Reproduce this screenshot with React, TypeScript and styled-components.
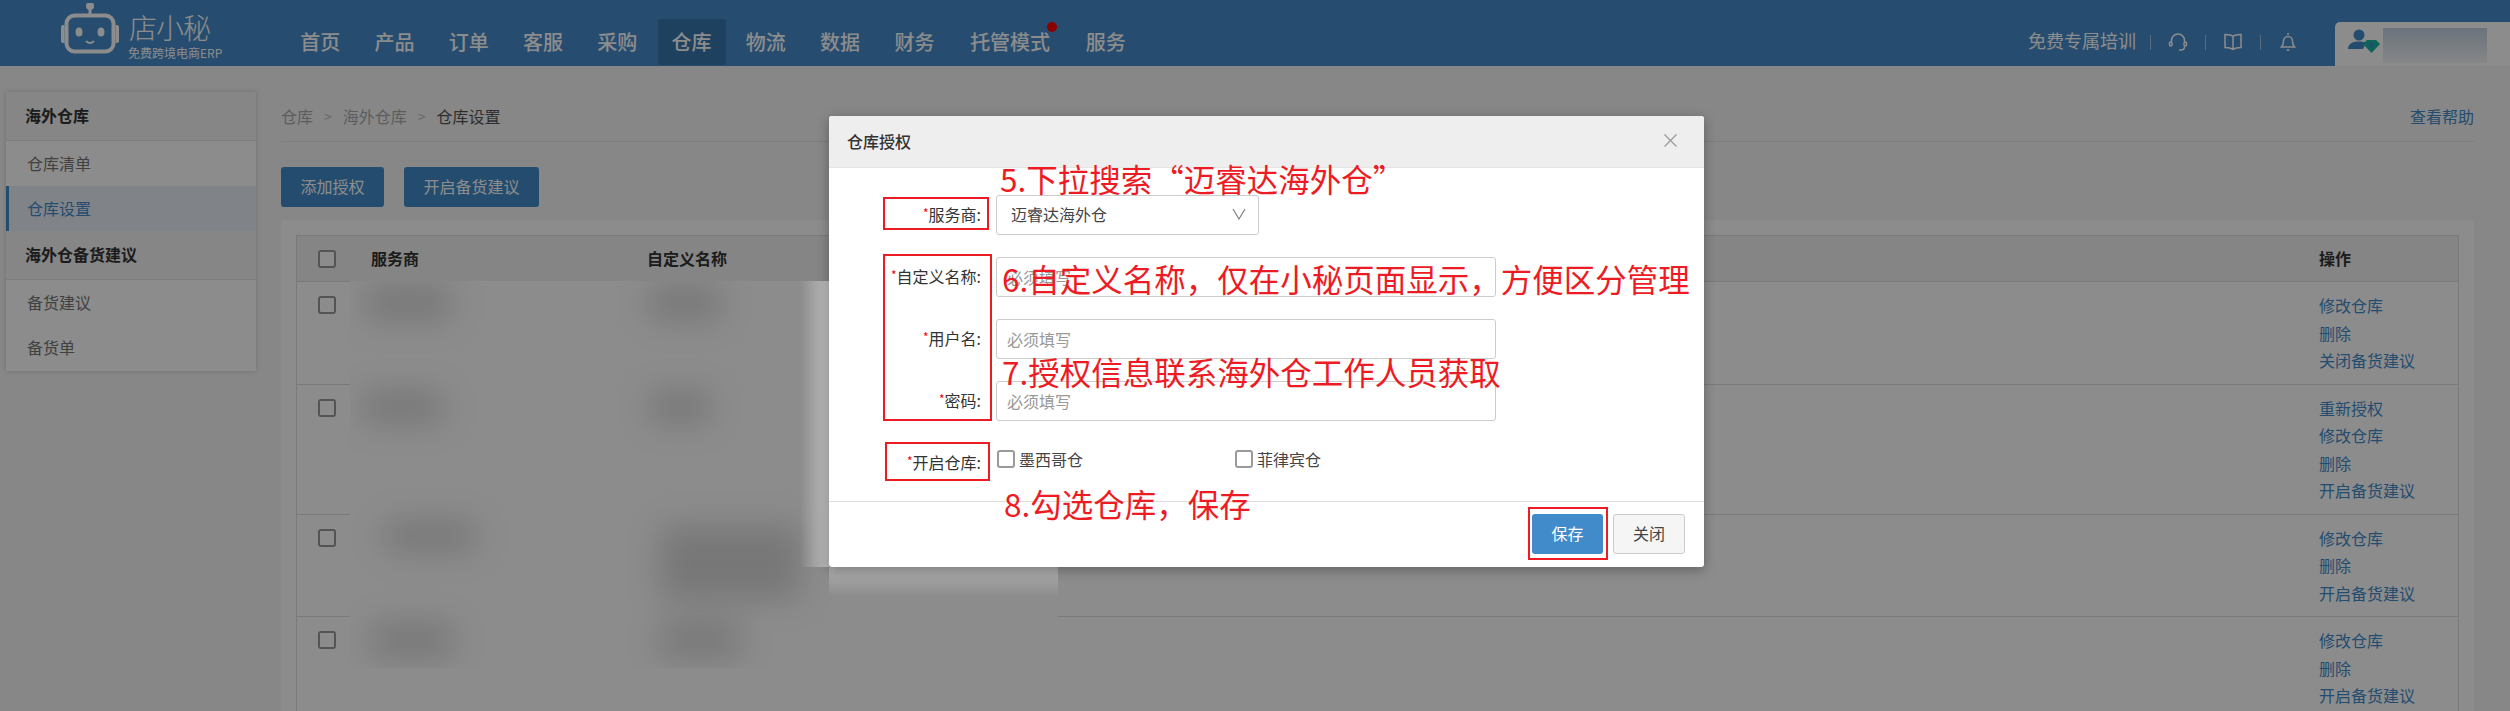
import React from "react";
import styled, { createGlobalStyle } from "styled-components";

const FONT = `"Noto Sans CJK SC", "Noto Sans", "Liberation Sans", sans-serif`;

const Global = createGlobalStyle`
  html, body { margin: 0; padding: 0; height: 711px; overflow: hidden; background: #f6f6f6; }
  * { box-sizing: border-box; }
  body { font-family: ${FONT}; font-size: 16px; color: #333; }
`;

const Page = styled.div`
  position: relative;
  width: 2510px;
  height: 711px;
  overflow: hidden;
  display: flex;
  flex-direction: column;
`;

/* ---------- top bar ---------- */
const TopBar = styled.header`
  height: 66px;
  flex: none;
  background: #458bcd;
  display: flex;
  color: #fff;
`;
const Logo = styled.div`
  width: 283px;
  flex: none;
  display: flex;
  padding: 3px 0 0 60px;
  gap: 9px;
`;
const LogoWords = styled.div`
  display: flex;
  flex-direction: column;
  align-items: flex-start;
`;
const LogoName = styled.span`
  font-size: 28px;
  line-height: 38px;
  font-weight: 300;
  letter-spacing: -1px;
  margin-top: 5px;
`;
const LogoSub = styled.span`
  font-size: 12px;
  line-height: 14px;
  white-space: nowrap;
  margin-left: -1px;
`;
const Nav = styled.nav`
  display: flex;
  align-self: flex-end;
  height: 47px;
`;
const NavItem = styled.a<{ $active?: boolean; $wide?: boolean }>`
  position: relative;
  height: 46px;
  margin: 0 ${(p) => (p.$wide ? 4.6 : 3.15)}px;
  padding: 0 14px;
  font-size: 20px;
  font-weight: 500;
  line-height: 45px;
  color: #fff;
  border-radius: 2px;
  background: ${(p) => (p.$active ? "#3a77b0" : "transparent")};
`;
const Dot = styled.i`
  position: absolute;
  right: 7px;
  top: 3px;
  width: 10px;
  height: 10px;
  border-radius: 50%;
  background: #ff0000;
`;
const TopRight = styled.div`
  margin-left: auto;
  display: flex;
  align-items: flex-start;
`;
const Training = styled.span`
  font-size: 18px;
  line-height: 22px;
  margin-top: 29px;
  margin-right: 14px;
`;
const Sep = styled.i`
  width: 1px;
  height: 15px;
  margin-top: 35px;
  background: rgba(255, 255, 255, 0.5);
`;
const IconSlot = styled.span`
  width: 54px;
  height: 20px;
  margin-top: 32px;
  display: flex;
  justify-content: center;
  color: #fff;
`;
const UserBox = styled.div`
  width: 175px;
  height: 44px;
  margin: 22px 0 0 20px;
  background: #fff;
  border-top-left-radius: 5px;
  display: flex;
  align-items: flex-start;
  padding: 6px 0 0 12px;
`;
const UserName = styled.div`
  width: 104px;
  height: 35px;
  margin-left: 2px;
  background: linear-gradient(#c3d2e3, #f3f4f6);
`;

/* ---------- body ---------- */
const Body = styled.div`
  flex: 1;
  display: flex;
  min-height: 0;
  padding: 26px 36px 0 6px;
  gap: 25px;
`;
const Side = styled.aside`
  width: 250px;
  height: 279px;
  flex: none;
  background: #fff;
  box-shadow: 0 0 5px rgba(0, 0, 0, 0.18);
`;
const SideHead = styled.div`
  height: 49px;
  padding-left: 19px;
  background: #f4f4f4;
  border-bottom: 1px solid #e3e3e3;
  font-size: 16px;
  font-weight: 700;
  line-height: 46px;
  color: #333;
`;
const SideItem = styled.div<{ $active?: boolean }>`
  height: 45px;
  padding-left: ${(p) => (p.$active ? 18 : 21)}px;
  border-left: ${(p) => (p.$active ? "3px solid #428bca" : "0")};
  background: ${(p) => (p.$active ? "#e9eff8" : "#fff")};
  color: ${(p) => (p.$active ? "#428bca" : "#777")};
  font-size: 16px;
  line-height: 45px;
`;
const Main = styled.main`
  flex: 1;
  min-width: 0;
  display: flex;
  flex-direction: column;
`;
const Crumbs = styled.div`
  height: 50px;
  flex: none;
  display: flex;
  align-items: center;
  padding-bottom: 2px;
  border-bottom: 1px solid #e3e3e3;
  font-size: 16px;
  color: #aaa;
`;
const CrumbSep = styled.span`
  margin: 0 11px;
  color: #bbb;
  font-size: 14px;
`;
const CrumbNow = styled.span`
  color: #555;
`;
const Help = styled.a`
  margin-left: auto;
  color: #428bca;
`;
const Tools = styled.div`
  display: flex;
  gap: 20px;
  margin: 25px 0 13px;
  flex: none;
`;
const PrimaryBtn = styled.button`
  height: 40px;
  padding: 0 19.5px 2px;
  border: 0;
  border-radius: 3px;
  background: #428bca;
  color: #fff;
  font: 16px ${FONT};
`;
const Panel = styled.section`
  flex: 1;
  background: #fff;
  padding: 15px 15px 0;
  border-radius: 4px 4px 0 0;
  min-height: 0;
`;
const Table = styled.div`
  height: 100%;
  border: 1px solid #dedede;
  border-bottom: 0;
`;
const Row = styled.div<{ $head?: boolean }>`
  display: grid;
  grid-template-columns: 53px 276px 1fr 154px;
  border-bottom: 1px solid #dedede;
  padding: ${(p) => (p.$head ? "0" : "11px 0 8px")};
  height: ${(p) => (p.$head ? "46px" : "auto")};
  align-items: ${(p) => (p.$head ? "center" : "start")};
  background: ${(p) => (p.$head ? "#f2f2f2" : "#fff")};
`;
const HeadCell = styled.div<{ $last?: boolean }>`
  padding: 0 0 2px ${(p) => (p.$last ? 15 : 21)}px;
  font-size: 16px;
  font-weight: 700;
  color: #333;
`;
const Box = styled.span`
  display: block;
  width: 18px;
  height: 18px;
  border: 2px solid #9a9a9a;
  border-radius: 3px;
  background: #fff;
`;
const BoxCell = styled.div<{ $row?: boolean }>`
  padding: ${(p) => (p.$row ? "3px 0 0 21px" : "0 0 0 21px")};
`;
const Links = styled.div`
  grid-column: 4;
  padding-left: 15px;
  display: flex;
  flex-direction: column;
  margin-top: -1px;
  margin-bottom: 1px;
`;
const LinkAct = styled.a`
  font-size: 16px;
  line-height: 27.5px;
  color: #428bca;
`;

/* ---------- blurred privacy patch ---------- */
const Patch = styled.div`
  position: absolute;
  left: 350px;
  top: 281px;
  width: 708px;
  height: 387px;
  background: #fff;
  overflow: hidden;
`;
const Blob = styled.i<{ $x: number; $y: number; $w: number; $h: number }>`
  position: absolute;
  left: ${(p) => p.$x - 350}px;
  top: ${(p) => p.$y - 281}px;
  width: ${(p) => p.$w}px;
  height: ${(p) => p.$h}px;
  background: rgba(0, 0, 0, 0.15);
  filter: blur(16px);
`;

/* ---------- modal ---------- */
const Mask = styled.div`
  position: absolute;
  inset: 0;
  background: rgba(0, 0, 0, 0.45);
`;
const FadeSide = styled.div`
  position: absolute;
  left: 800px;
  top: 281px;
  width: 29px;
  height: 286px;
  background: linear-gradient(to right, rgba(255, 255, 255, 0), rgba(255, 255, 255, 0.42));
`;
const FadeBottom = styled.div`
  position: absolute;
  left: 829px;
  top: 567px;
  width: 229px;
  height: 30px;
  background: linear-gradient(rgba(255, 255, 255, 0.3), rgba(255, 255, 255, 0));
`;
const Modal = styled.div`
  position: absolute;
  left: 829px;
  top: 116px;
  width: 875px;
  height: 451px;
  background: #fff;
  border-radius: 3px;
  box-shadow: 0 3px 12px rgba(0, 0, 0, 0.3);
  display: flex;
  flex-direction: column;
`;
const ModalHead = styled.div`
  height: 52px;
  flex: none;
  background: #eee;
  border-bottom: 1px solid #e5e5e5;
  border-radius: 3px 3px 0 0;
  display: flex;
  align-items: center;
  justify-content: space-between;
  padding: 0 26px 2px 18px;
  font-size: 16px;
  font-weight: 500;
  color: #333;
`;
const Close = styled.span`
  display: flex;
  color: #9a9a9a;
`;
const Form = styled.div`
  padding-top: 27px;
  display: flex;
  flex-direction: column;
  gap: 22px;
`;
const FormRow = styled.div`
  display: flex;
  align-items: center;
  height: 40px;
`;
const Label = styled.label`
  width: 152px;
  margin-right: 15px;
  padding-bottom: 2px;
  text-align: right;
  font-size: 16px;
  color: #333;
  white-space: nowrap;
`;
const Star = styled.span`
  color: #e00;
  font-size: 12px;
  vertical-align: 3px;
`;
const Select = styled.div`
  width: 263px;
  height: 40px;
  border: 1px solid #ccc;
  border-radius: 3px;
  padding: 0 12px 2px 14px;
  display: flex;
  align-items: center;
  justify-content: space-between;
  font-size: 16px;
  color: #444;
`;
const Input = styled.input`
  width: 500px;
  height: 40px;
  border: 1px solid #ccc;
  border-radius: 3px;
  padding: 0 10px;
  font: 16px ${FONT};
  &::placeholder { color: #999; opacity: 1; }
`;
const Options = styled.div`
  display: flex;
  align-self: flex-start;
  padding-top: 7px;
  margin-left: 1px;
`;
const Option = styled.div`
  width: 238px;
  display: flex;
  align-items: center;
  gap: 4px;
  font-size: 16px;
  line-height: 18px;
  color: #444;
`;
const Foot = styled.div`
  margin-top: auto;
  height: 66px;
  border-top: 1px solid #ddd;
  display: flex;
  justify-content: flex-end;
  align-items: flex-start;
  gap: 10px;
  padding: 12px 19px 0 0;
`;
const SaveBtn = styled.button`
  width: 71px;
  height: 40px;
  padding: 0 0 2px;
  border: 0;
  border-radius: 3px;
  background: #428bca;
  color: #fff;
  font: 16px ${FONT};
`;
const CloseBtn = styled.button`
  width: 72px;
  height: 40px;
  padding: 0 0 2px;
  border: 1px solid #ccc;
  border-radius: 3px;
  background: #f5f5f5;
  color: #444;
  font: 16px ${FONT};
`;

/* ---------- red annotations ---------- */
const Note = styled.span<{ $x: number; $y: number }>`
  position: absolute;
  left: ${(p) => p.$x - 829}px;
  top: ${(p) => p.$y - 116 - 24}px;
  height: 48px;
  font-size: 31.500px;
  line-height: 48px;
  color: #ed1c24;
  white-space: nowrap;
`;
const RedBox = styled.i<{ $x: number; $y: number; $w: number; $h: number }>`
  position: absolute;
  left: ${(p) => p.$x - 829}px;
  top: ${(p) => p.$y - 116}px;
  width: ${(p) => p.$w}px;
  height: ${(p) => p.$h}px;
  border: 2px solid #ed1c24;
`;

const RobotSvg = styled.svg`
  flex: none;
`;
const Robot = () => (
  <RobotSvg width="60" height="52" viewBox="0 0 60 52" fill="none">
    <circle cx="30" cy="3" r="4" fill="#fff" />
    <path d="M30 6v7" stroke="#fff" strokeWidth="3" />
    <rect x="6.500" y="12.500" width="47" height="36" rx="8" stroke="#fff" strokeWidth="4" />
    <path d="M4.500 22H3a2 2 0 0 0-2 2v14a2 2 0 0 0 2 2h1.500zM55.500 22H57a2 2 0 0 1 2 2v14a2 2 0 0 1-2 2h-1.500z" fill="#fff" />
    <ellipse cx="19" cy="29" rx="3.500" ry="4.500" fill="#fff" />
    <ellipse cx="41" cy="29" rx="3.500" ry="4.500" fill="#fff" />
    <path d="M26.500 38.500q3.500 3 7 0" stroke="#fff" strokeWidth="1.800" strokeLinecap="round" />
  </RobotSvg>
);
const Headset = () => (
  <svg width="20" height="20" viewBox="0 0 20 20" fill="none" stroke="currentColor" strokeWidth="1.500">
    <path d="M3.500 10V8.500a6.500 6.500 0 0 1 13 0V10" />
    <rect x="1.500" y="10" width="2.500" height="4" rx="1.200" />
    <rect x="16" y="10" width="2.500" height="4" rx="1.200" />
    <path d="M16.500 14.500q0 3.500-3.500 3.500h-2" />
  </svg>
);
const Book = () => (
  <svg width="20" height="20" viewBox="0 0 20 20" fill="none" stroke="currentColor" strokeWidth="1.500">
    <path d="M10 4.500C8.500 3 5 2.500 2 2.500v13c3 0 6 .5 8 2 2-1.500 5-2 8-2v-13c-3 0-6.500.5-8 2zM10 4.500v13" />
  </svg>
);
const Bell = () => (
  <svg width="20" height="20" viewBox="0 0 20 20" fill="none" stroke="currentColor" strokeWidth="1.500">
    <path d="M10 1v2M5.500 9a4.500 4.500 0 0 1 9 0c0 3 .5 4.500 2 6H3.500c1.500-1.500 2-3 2-6zM3.500 15h13M8.500 18h3" />
  </svg>
);
const UserSvg = styled.svg`
  flex: none;
`;
const UserIcon = () => (
  <UserSvg width="34" height="26" viewBox="0 0 34 26">
    <circle cx="12" cy="7" r="5.500" fill="#428bca" />
    <path d="M1 21c0-5 4-7.500 11-7.500 3 0 5.500.5 7 1.500l-3 6z" fill="#428bca" />
    <path d="M16 16l4-4h9l4 4-8.500 9z" fill="#14b8a6" />
    <path d="M22 16l2.500-2 2.500 2-2.500 5z" fill="#428bca" />
  </UserSvg>
);
const Chevron = () => (
  <svg width="14" height="14" viewBox="0 0 14 14" fill="none" stroke="#777" strokeWidth="1.100">
    <path d="M1 2l6 10 6-10" />
  </svg>
);
const CloseX = () => (
  <svg width="15" height="15" viewBox="0 0 15 15" fill="none" stroke="currentColor" strokeWidth="1.300">
    <path d="M1.500 1.500l12 12M13.500 1.500l-12 12" />
  </svg>
);

const navs = ["首页", "产品", "订单", "客服", "采购", "仓库", "物流", "数据", "财务", "托管模式", "服务"];
const rows = [
  ["修改仓库", "删除", "关闭备货建议"],
  ["重新授权", "修改仓库", "删除", "开启备货建议"],
  ["修改仓库", "删除", "开启备货建议"],
  ["修改仓库", "删除", "开启备货建议"],
];
const blobs = [
  [365, 285, 85, 36],
  [650, 285, 70, 36],
  [362, 390, 80, 34],
  [650, 390, 60, 34],
  [385, 520, 90, 32],
  [660, 525, 140, 75],
  [372, 622, 80, 36],
  [660, 622, 80, 36],
];

export default function App() {
  return (
    <Page>
      <Global />
      <TopBar>
        <Logo>
          <Robot />
          <LogoWords>
            <LogoName>店小秘</LogoName>
            <LogoSub>免费跨境电商ERP</LogoSub>
          </LogoWords>
        </Logo>
        <Nav>
          {navs.map((n) => (
            <NavItem key={n} $active={n === "仓库"} $wide={n === "托管模式"}>
              {n}
              {n === "托管模式" && <Dot />}
            </NavItem>
          ))}
        </Nav>
        <TopRight>
          <Training>免费专属培训</Training>
          <Sep />
          <IconSlot><Headset /></IconSlot>
          <Sep />
          <IconSlot><Book /></IconSlot>
          <Sep />
          <IconSlot><Bell /></IconSlot>
          <UserBox>
            <UserIcon />
            <UserName />
          </UserBox>
        </TopRight>
      </TopBar>
      <Body>
        <Side>
          <SideHead>海外仓库</SideHead>
          <SideItem>仓库清单</SideItem>
          <SideItem $active>仓库设置</SideItem>
          <SideHead>海外仓备货建议</SideHead>
          <SideItem>备货建议</SideItem>
          <SideItem>备货单</SideItem>
        </Side>
        <Main>
          <Crumbs>
            仓库<CrumbSep>&gt;</CrumbSep>海外仓库<CrumbSep>&gt;</CrumbSep>
            <CrumbNow>仓库设置</CrumbNow>
            <Help>查看帮助</Help>
          </Crumbs>
          <Tools>
            <PrimaryBtn>添加授权</PrimaryBtn>
            <PrimaryBtn>开启备货建议</PrimaryBtn>
          </Tools>
          <Panel>
            <Table>
              <Row $head>
                <BoxCell><Box /></BoxCell>
                <HeadCell>服务商</HeadCell>
                <HeadCell>自定义名称</HeadCell>
                <HeadCell $last>操作</HeadCell>
              </Row>
              {rows.map((r, i) => (
                <Row key={i}>
                  <BoxCell $row><Box /></BoxCell>
                  <Links>
                    {r.map((t) => (
                      <LinkAct key={t}>{t}</LinkAct>
                    ))}
                  </Links>
                </Row>
              ))}
            </Table>
          </Panel>
        </Main>
      </Body>
      <Patch>
        {blobs.map(([x, y, w, h], i) => (
          <Blob key={i} $x={x} $y={y} $w={w} $h={h} />
        ))}
      </Patch>
      <Mask />
      <FadeSide />
      <FadeBottom />
      <Modal>
        <ModalHead>
          仓库授权
          <Close><CloseX /></Close>
        </ModalHead>
        <Form>
          <FormRow>
            <Label><Star>*</Star>服务商:</Label>
            <Select>
              迈睿达海外仓
              <Chevron />
            </Select>
          </FormRow>
          <FormRow>
            <Label><Star>*</Star>自定义名称:</Label>
            <Input placeholder="必须填写" />
          </FormRow>
          <FormRow>
            <Label><Star>*</Star>用户名:</Label>
            <Input placeholder="必须填写" />
          </FormRow>
          <FormRow>
            <Label><Star>*</Star>密码:</Label>
            <Input placeholder="必须填写" />
          </FormRow>
          <FormRow>
            <Label><Star>*</Star>开启仓库:</Label>
            <Options>
              <Option><Box />墨西哥仓</Option>
              <Option><Box />菲律宾仓</Option>
            </Options>
          </FormRow>
        </Form>
        <Foot>
          <SaveBtn>保存</SaveBtn>
          <CloseBtn>关闭</CloseBtn>
        </Foot>
        <Note $x={1000} $y={178}>5.下拉搜索“迈睿达海外仓”</Note>
        <Note $x={1002} $y={278}>6.自定义名称，仅在小秘页面显示，方便区分管理</Note>
        <Note $x={1002} $y={371}>7.授权信息联系海外仓工作人员获取</Note>
        <Note $x={1004} $y={503}>8.勾选仓库，保存</Note>
        <RedBox $x={883} $y={197} $w={106} $h={33} />
        <RedBox $x={883} $y={254} $w={109} $h={167} />
        <RedBox $x={885} $y={442} $w={105} $h={39} />
        <RedBox $x={1528} $y={507} $w={80} $h={53} />
      </Modal>
    </Page>
  );
}
